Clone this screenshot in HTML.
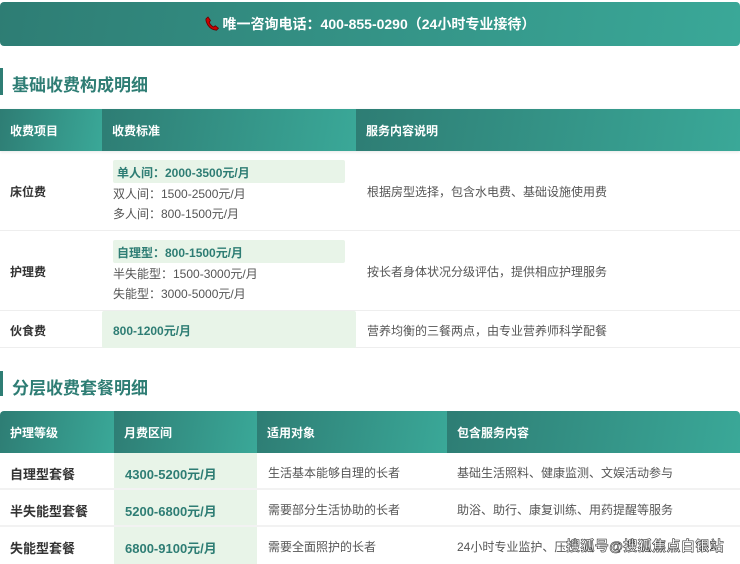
<!DOCTYPE html>
<html><head><meta charset="utf-8"><style>
*{margin:0;padding:0;box-sizing:border-box}
body{width:740px;height:564px;overflow:hidden;background:#fff;font-family:"Liberation Sans","Noto Sans CJK SC",sans-serif;position:relative;color:#333}
.abs{position:absolute}
.banner{left:0;top:2px;width:740px;height:44px;border-radius:4px;background:linear-gradient(100deg,#2e7d74,#3aa898);color:#fff;font-weight:bold;font-size:14px;text-align:center;line-height:44px}
.h{left:0;width:4px;background:#2e7d74}
.ht{left:12px;font-size:17px;font-weight:bold;color:#2e7d74}
.hc{background:linear-gradient(100deg,#2e7d74,#3aa898);color:#fff;font-weight:bold;font-size:12px;display:flex;align-items:center;padding-left:10px}
.row{left:0;width:740px;border-bottom:1px solid #eee}
.t{font-size:12px;position:absolute;white-space:nowrap}
.b{font-weight:bold;color:#333}
.g{color:#2e7d74;font-weight:bold}
.box{background:#e8f4e8;border-radius:2px}
</style></head><body>
<div class="abs banner"><svg width="14" height="15" viewBox="0 0 14 15" style="vertical-align:-2px"><path d="M3 1 L5.5 4.5 L4.2 6.2 Q5.5 9.5 8.5 11 L10.3 9.8 L13.5 12.2 L11.5 14.2 Q6 14 2.8 9 Q0.5 5 1 2.8 Z" fill="#c00" stroke="#600" stroke-width="0.8"/></svg> 唯一咨询电话：400-855-0290（24小时专业接待）</div>
<div class="abs h" style="top:68px;height:27px;width:3px"></div>
<div class="abs ht" style="top:71px">基础收费构成明细</div>
<div class="abs" style="left:0;top:109px;width:740px;height:42px;display:flex;box-shadow:0 1px 3px rgba(0,0,0,.1)">
<div class="hc" style="width:102px">收费项目</div><div class="hc" style="width:254px">收费标准</div><div class="hc" style="width:384px">服务内容说明</div></div>
<div class="abs row" style="top:151px;height:80px"></div>
<div class="abs row" style="top:231px;height:80px"></div>
<div class="abs row" style="top:311px;height:37px"></div>
<div class="abs box" style="left:113px;top:160px;width:232px;height:23px"></div>
<div class="abs box" style="left:113px;top:240px;width:232px;height:23px"></div>
<div class="abs box" style="left:102px;top:311px;width:254px;height:37px"></div>
<div class="t b" style="left:10px;top:183px">床位费</div>
<div class="t g" style="left:117px;top:164px">单人间：2000-3500元/月</div>
<div class="t" style="left:113px;top:185px;color:#555">双人间：1500-2500元/月</div>
<div class="t" style="left:113px;top:205px;color:#555">多人间：800-1500元/月</div>
<div class="t" style="left:367px;top:183px;color:#555">根据房型选择，包含水电费、基础设施使用费</div>
<div class="t b" style="left:10px;top:263px">护理费</div>
<div class="t g" style="left:117px;top:244px">自理型：800-1500元/月</div>
<div class="t" style="left:113px;top:265px;color:#555">半失能型：1500-3000元/月</div>
<div class="t" style="left:113px;top:285px;color:#555">失能型：3000-5000元/月</div>
<div class="t" style="left:367px;top:263px;color:#555">按长者身体状况分级评估，提供相应护理服务</div>
<div class="t b" style="left:10px;top:322px">伙食费</div>
<div class="t g" style="left:113px;top:322px">800-1200元/月</div>
<div class="t" style="left:367px;top:322px;color:#555">营养均衡的三餐两点，由专业营养师科学配餐</div>
<div class="abs h" style="top:371px;height:25px;width:3px"></div>
<div class="abs ht" style="top:374px">分层收费套餐明细</div>
<div class="abs" style="left:0;top:411px;width:740px;height:42px;display:flex;border-radius:4px 4px 0 0;overflow:hidden">
<div class="hc" style="width:114px">护理等级</div><div class="hc" style="width:143px">月费区间</div><div class="hc" style="width:190px">适用对象</div><div class="hc" style="width:293px">包含服务内容</div></div>
<div class="abs box" style="left:114px;top:453px;width:143px;height:111px;border-radius:0"></div>
<div class="abs row" style="top:453px;height:37px;border-bottom:2px solid #f2f2f2"></div>
<div class="abs row" style="top:490px;height:37px;border-bottom:2px solid #f2f2f2"></div>
<div class="t b" style="left:10px;top:464px;font-size:13px">自理型套餐</div>
<div class="t g" style="left:125px;top:464px;font-size:13px">4300-5200元/月</div>
<div class="t" style="left:268px;top:464px;color:#555">生活基本能够自理的长者</div>
<div class="t" style="left:457px;top:464px;color:#555">基础生活照料、健康监测、文娱活动参与</div>
<div class="t b" style="left:10px;top:501px;font-size:13px">半失能型套餐</div>
<div class="t g" style="left:125px;top:501px;font-size:13px">5200-6800元/月</div>
<div class="t" style="left:268px;top:501px;color:#555">需要部分生活协助的长者</div>
<div class="t" style="left:457px;top:501px;color:#555">助浴、助行、康复训练、用药提醒等服务</div>
<div class="t b" style="left:10px;top:538px;font-size:13px">失能型套餐</div>
<div class="t g" style="left:125px;top:538px;font-size:13px">6800-9100元/月</div>
<div class="t" style="left:268px;top:538px;color:#555">需要全面照护的长者</div>
<div class="t" style="left:457px;top:538px;color:#555">24小时专业监护、压</div>
<div class="t" style="left:566px;top:536px;font-size:14px;letter-spacing:0.4px;color:#fff;font-weight:bold;-webkit-text-stroke:0.6px #333">搜狐号@搜狐焦点白银站</div>
</body></html>
